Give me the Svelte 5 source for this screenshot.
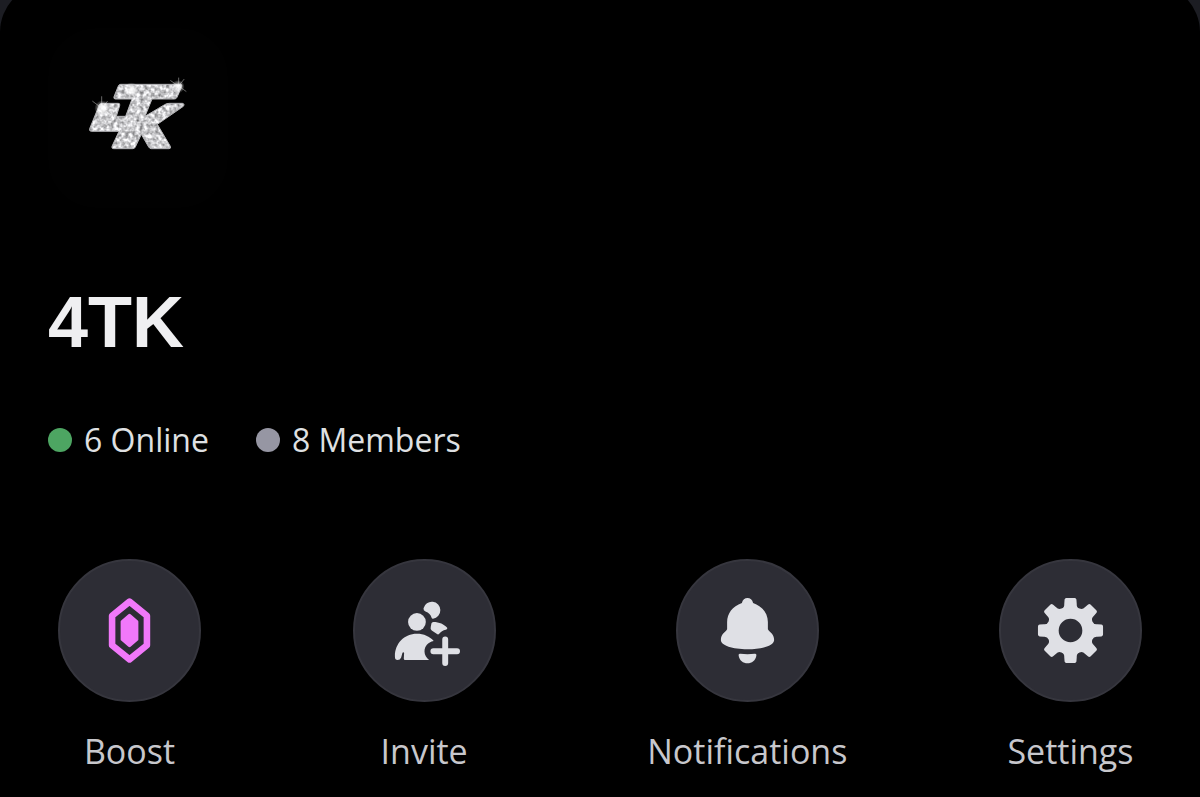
<script lang="ts">
  type Action = { id: string; label: string };

  let { name = '4TK', online = 6, members = 8 } = $props();

  const actions: Action[] = [
    { id: 'boost', label: 'Boost' },
    { id: 'invite', label: 'Invite' },
    { id: 'notifications', label: 'Notifications' },
    { id: 'settings', label: 'Settings' },
  ];

  // eight teeth joined by round notches
  function gearPath() {
    const tooth = [[-19, -81], [-18, -94], [-13, -99], [13, -99], [18, -94], [19, -81]];
    let d = '';
    for (let i = 0; i < 8; i++) {
      const a = (i * Math.PI) / 4;
      const p = tooth.map(([x, y]) =>
        `${(x * Math.cos(a) - y * Math.sin(a)).toFixed(1)} ${(x * Math.sin(a) + y * Math.cos(a)).toFixed(1)}`);
      d += i === 0 ? `M${p[0]}` : `A14 14 0 0 0 ${p[0]}`;
      d += `L${p[1]}A6 6 0 0 1 ${p[2]}L${p[3]}A6 6 0 0 1 ${p[4]}L${p[5]}`;
    }
    return d + 'A14 14 0 0 0 -19 -81ZM0 -36A36 36 0 1 0 0 36A36 36 0 1 0 0 -36Z';
  }
</script>

<main class="sheet">
  <svg class="avatar" viewBox="24 24 540 540" role="img" aria-label="{name} server icon">
    <defs>
      <filter id="gems" x="0" y="0" width="1" height="1" color-interpolation-filters="sRGB">
        <feTurbulence type="fractalNoise" baseFrequency="0.09" numOctaves="2" seed="8" />
        <feColorMatrix values="0.8 0.4 0 0 0.2  0.8 0.4 0 0 0.2  0.8 0.4 0 0 0.21  0 0 0 0 1" />
        <feComposite in2="SourceGraphic" operator="in" />
      </filter>
      <radialGradient id="glow">
        <stop offset="0" stop-color="#fff" />
        <stop offset="0.3" stop-color="#fff" stop-opacity="0.7" />
        <stop offset="1" stop-color="#fff" stop-opacity="0" />
      </radialGradient>
      <path id="mark" d="M242 193H421Q427 193 425 199L411 232Q409 237 403 237H336L315 289L374 254Q380 250 388 250H427Q435 251 430 259L352 313L391 379Q394 386 387 386H334Q329 386 326 381L304 343L286 381Q284 386 278 386H221Q214 386 216 379L237 334H154Q147 334 149 326L178 255Q180 250 186 250H235Q241 250 239 257L229 289H257L276 237H226Q220 237 222 230L235 198Q237 193 242 193Z" />
    </defs>
    <use href="#mark" fill="#fff" filter="url(#gems)" />
    <use href="#mark" fill="none" stroke="#b4b4b7" stroke-width="3" />
    <circle cx="187" cy="265" r="24" fill="url(#glow)" />
    <circle cx="274" cy="209" r="22" fill="url(#glow)" />
    <circle cx="414" cy="200" r="20" fill="url(#glow)" />
    <path class="ray" d="M158 244L212 284M185 230V292M202 244L174 280M392 182L438 214M432 178L398 220M416 174V222" />
  </svg>

  <h1>{name}</h1>

  <ul class="stats">
    <li><span class="dot on"></span>{online} Online</li>
    <li><span class="dot"></span>{members} Members</li>
  </ul>

  <nav class="actions" aria-label="Server actions">
    {#each actions as a (a.id)}
      <button class="action" type="button">
        <span class="disc">
          <svg class="icon {a.id}" viewBox="-108 -108 216 216" aria-hidden="true">
            {#if a.id === 'boost'}
              <path class="ring" d="M0 -88L53 -45V45L0 88L-53 45V-45Z" />
              <path class="gem" d="M0 -46L22 -27V27L0 46L-22 27V-27Z" />
            {:else if a.id === 'invite'}
              <circle cx="-23" cy="-26" r="27" />
              <path d="M-3 -68A26 26 0 1 1 26 -36Q22 -35 21 -40Q18 -52 3 -58Q-4 -61 -3 -68Z" />
              <path d="M27 -26C45 -26 60 -19 69 -8Q71 -3 65 -2Q52 0 44 11Q41 14 37 10L22 0Q17 -5 19 -11L21 -21Q22 -26 27 -26Z" />
              <path d="M-90 78C-90 40 -62 10 -23 10C-2 10 16 18 28 32C10 36 0 48 0 64C0 74 6 84 14 90H-59Q-63 90 -63 85L-62 68Q-64 64 -67 68L-71 82Q-74 90 -82 90Q-90 90 -90 80Z" />
              <path class="plus" d="M63 27V99M27 63H99" />
            {:else if a.id === 'notifications'}
              <path d="M-17 -84C-15 -94 -8 -99 0 -99S15 -94 17 -84C46 -74 62 -52 62 -26V-4C68 6 81 10 81 29C81 46 45 57 0 57S-81 46 -81 29C-81 10 -68 6 -62 -4V-26C-62 -52 -46 -74 -17 -84Z" />
              <path d="M-27 76Q-28 70 -22 71Q0 73 22 71Q28 70 27 76C25 91 13 100 0 100S-25 91 -27 76Z" />
            {:else}
              <path fill-rule="evenodd" d={gearPath()} />
            {/if}
          </svg>
        </span>
        <span class="label">{a.label}</span>
      </button>
    {/each}
  </nav>
</main>

<style>
  :global(body) { margin: 0; background: #1c1d23; overflow-x: hidden; }
  .sheet { display: flow-root; box-sizing: border-box; min-height: calc(100vh + 16px); margin-top: -16px; padding: 44px 48px 24px; background: #000; border-radius: 48px 48px 0 0; font-family: 'Open Sans', 'Noto Sans', sans-serif; color: #dfe0e2; }
  .avatar { display: block; width: 180px; height: 180px; border-radius: 48px; background: #010101; }
  .ray { stroke: #fff; stroke-width: 2; stroke-linecap: round; opacity: 0.6; }
  h1 { margin: 74px 0 0; font-family: 'Liberation Sans', Arial, sans-serif; font-size: 72px; line-height: 80px; font-weight: 700; color: #efeff1; }
  .stats { display: flex; flex-wrap: wrap; gap: 0 47px; margin: 54px 0 0; padding: 0; list-style: none; font-size: 32px; line-height: 48px; }
  .stats li { display: flex; align-items: center; gap: 12px; }
  .dot { width: 24px; height: 24px; border-radius: 50%; background: #9696a3; }
  .dot.on { background: #4da562; }
  .actions { display: flex; justify-content: space-between; margin-top: 95px; padding: 0 10px; }
  .action { display: flex; flex-direction: column; align-items: center; gap: 27px; min-width: 143px; padding: 0; border: 0; background: none; font: inherit; color: #c7c7cc; cursor: pointer; }
  .disc { display: grid; place-items: center; box-sizing: border-box; width: 143px; height: 143px; border: 2px solid #36363e; border-radius: 50%; background: #2d2d35; }
  .action:hover .disc { background: #36363f; }
  .icon { width: 71px; height: 71px; fill: #dfe0e5; }
  .boost { fill: #f178fa; stroke: #f178fa; stroke-linejoin: round; }
  .ring { fill: none; stroke-width: 20; }
  .gem { stroke-width: 10; }
  .plus { fill: none; stroke: #dfe0e5; stroke-width: 18; stroke-linecap: round; }
  .label { font-size: 34px; line-height: 44px; }
</style>
